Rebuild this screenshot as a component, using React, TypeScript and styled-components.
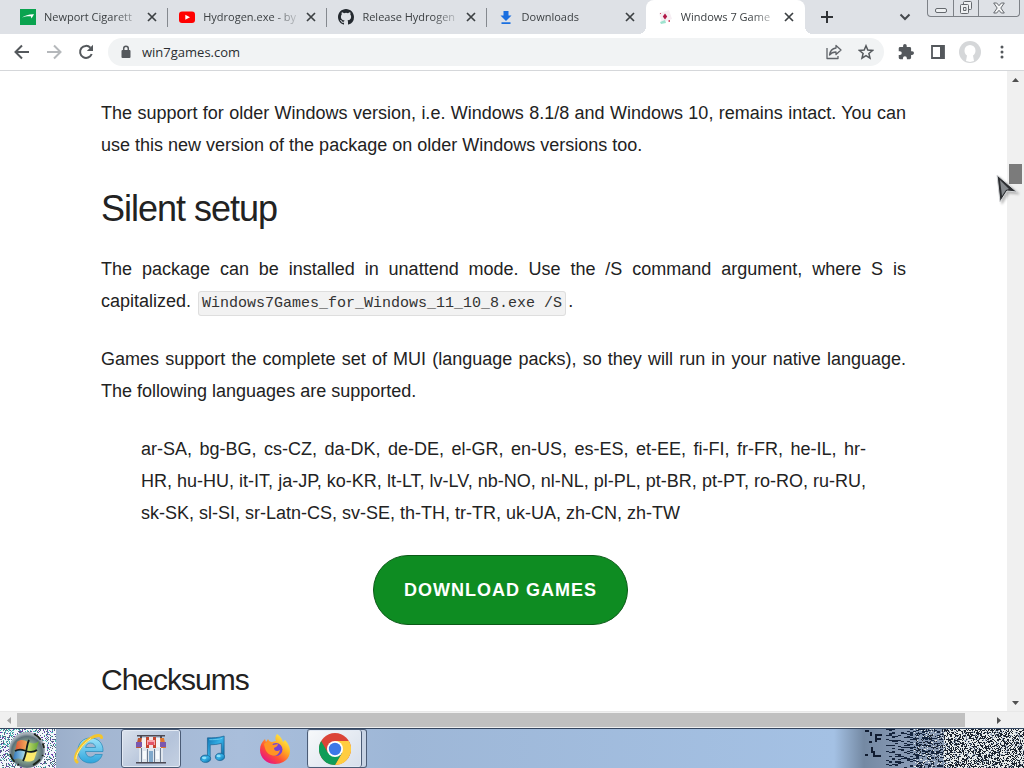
import React from 'react';
import styled, { createGlobalStyle, css } from 'styled-components';

const GlobalStyle = createGlobalStyle`
  * { box-sizing: border-box; }
  html, body, #root { height: 100%; margin: 0; }
  body { overflow: hidden; background: #fff; font-family: "Open Sans", "Noto Sans", sans-serif; }
  button, input { font: inherit; color: inherit; }
  svg { display: block; flex: none; }
`;

const Screen = styled.div`
  display: flex;
  flex-direction: column;
  height: 100%;
`;

const TabStrip = styled.div`
  display: flex;
  flex: none;
  height: 34px;
  padding-left: 9px;
  background: #dee1e6;
  color: #3c4043;
`;

const TabList = styled.div`
  display: flex;
  flex: 0 1 796px;
  min-width: 0;
`;

const TabItem = styled.div<{ $active?: boolean; $divided?: boolean }>`
  position: relative;
  display: flex;
  align-items: center;
  flex: 1 1 0;
  min-width: 0;
  gap: 8px;
  padding: 0 10px 0 11px;

  ${p => p.$divided && css`
    &::after {
      content: '';
      position: absolute;
      right: 0;
      top: 8px;
      width: 1px;
      height: 19px;
      background: #85898f;
    }
  `}

  ${p => p.$active && css`
    background: #fff;
    border-radius: 8px 8px 0 0;
    &::before, &::after {
      content: '';
      position: absolute;
      bottom: 0;
      width: 8px;
      height: 8px;
    }
    &::before { left: -8px; background: radial-gradient(circle at 0 0, transparent 8px, #fff 8px); }
    &::after { right: -8px; background: radial-gradient(circle at 100% 0, transparent 8px, #fff 8px); }
  `}
`;

const TabTitle = styled.button`
  flex: 1;
  min-width: 0;
  padding: 0;
  border: 0;
  background: none;
  overflow: hidden;
  font-size: 11px;
  line-height: 18px;
  text-align: left;
  white-space: nowrap;
  mask-image: linear-gradient(to right, #000 75%, transparent 105%);
`;

const PlainButton = styled.button<{ $size?: number }>`
  display: flex;
  align-items: center;
  justify-content: center;
  flex: none;
  width: ${p => p.$size ?? 32}px;
  height: ${p => p.$size ?? 32}px;
  padding: 0;
  border: 0;
  background: none;
`;

const StripTail = styled.div`
  display: flex;
  flex: 1;
  align-items: center;
  justify-content: space-between;
  padding: 0 6px;
`;

const WindowControls = styled.div`
  display: flex;
  flex: none;
  height: 17px;
  margin-right: 4px;
  border: 1px solid #7d8187;
  border-top: 0;
  border-radius: 0 0 4px 4px;
`;

const WindowButton = styled.button<{ $wide?: boolean }>`
  display: flex;
  align-items: center;
  justify-content: center;
  width: ${p => (p.$wide ? 41 : 25)}px;
  padding: 0;
  border: 0;
  background: none;
  & + & { border-left: 1px solid #7d8187; }
`;

const Toolbar = styled.div`
  display: flex;
  align-items: center;
  flex: none;
  height: 37px;
  padding: 0 6px;
  border-bottom: 1px solid #d5d7da;
  background: #fff;
  color: #5a5e62;
`;

const AddressBar = styled.form`
  display: flex;
  align-items: center;
  flex: 1;
  min-width: 0;
  height: 28px;
  margin: 0 6px;
  padding: 0 2px 0 12px;
  border-radius: 14px;
  background: #f1f3f4;
`;

const AddressInput = styled.input`
  flex: 1;
  min-width: 0;
  padding: 0 10px;
  border: 0;
  outline: 0;
  background: none;
  color: #2b2e31;
  font-size: 13px;
`;

const Viewport = styled.div`
  display: flex;
  flex: 1;
  min-height: 0;
`;

const Page = styled.main`
  flex: 1;
  min-width: 0;
  overflow: hidden;
  padding: 26px 101px 0;
  color: #222;
  font-family: "Liberation Sans", Arial, sans-serif;
  font-size: 18px;
  line-height: 32px;
  text-align: justify;
`;

const Paragraph = styled.p`
  margin: 0 0 26px;
`;

const SectionTitle = styled.h2`
  margin: 0 0 22px;
  font-size: 36px;
  font-weight: 400;
  line-height: 44px;
  letter-spacing: -1px;
  text-align: left;
`;

const SubTitle = styled.h3`
  margin: 36px 0 0;
  font-size: 30px;
  font-weight: 400;
  line-height: 38px;
  letter-spacing: -1px;
  text-align: left;
`;

const Quote = styled.blockquote`
  margin: 0 40px 26px;
`;

const Command = styled.code`
  margin: 0 2px;
  padding: 3px;
  border: 1px solid #dedede;
  border-radius: 3px;
  background: #f2f2f2;
  color: #333;
  font-family: "Liberation Mono", monospace;
  font-size: 15px;
  line-height: 24px;
`;

const DownloadRow = styled.div`
  display: flex;
  justify-content: center;
  padding-right: 6px;
`;

const DownloadLink = styled.a`
  padding: 18px 30px;
  border: 1px solid #0b5a17;
  border-radius: 35px;
  background: #0e8c22;
  color: #fff;
  font-size: 18px;
  font-weight: 700;
  letter-spacing: 1px;
  text-decoration: none;
`;

const VerticalBar = styled.div`
  display: flex;
  flex-direction: column;
  align-items: center;
  flex: none;
  width: 17px;
  background: #f0f0f0;
`;

const VerticalThumb = styled.div`
  width: 13px;
  height: 20px;
  margin-top: 76px;
  margin-bottom: auto;
  background: #7b7b7b;
`;

const HorizontalBar = styled.div`
  display: flex;
  align-items: center;
  flex: none;
  height: 17px;
  padding-right: 17px;
  border-top: 1px solid #e8e8e8;
  background: #f0f0f0;
`;

const HorizontalTrack = styled.div`
  flex: 1;
  padding-right: 25px;
`;

const HorizontalThumb = styled.div`
  height: 14px;
  background: #c0c0c0;
`;

const Taskbar = styled.nav`
  display: flex;
  flex: none;
  height: 40px;
  border-top: 1px solid #33455f;
  background: linear-gradient(to right, #8fa3bf 0, #a3b6d1 90px, #a9bedb 240px, #9eb7d7 400px, #a4c1e4 calc(100% - 190px), #7489a3 calc(100% - 160px), #8799b4 calc(100% - 120px), #8b9ab0 100%);
`;

const TaskButton = styled.button<{ $open?: boolean }>`
  display: flex;
  align-items: center;
  justify-content: center;
  flex: none;
  width: 60px;
  height: 39px;
  margin-right: 2px;
  padding: 0;
  border: 1px solid ${p => (p.$open ? '#4b5c76' : 'transparent')};
  border-radius: 3px;
  background: ${p => (p.$open ? 'linear-gradient(135deg, #dbe2ec, #b4c3da 60%, #c5d1e2)' : 'none')};
  box-shadow: ${p => (p.$open ? 'inset 0 0 0 1px #e3eaf4' : 'none')};
`;

const StackedTask = styled.div`
  display: flex;
  flex: none;
  width: 60px;
  height: 39px;
  border: 1px solid #4b5c76;
  border-left: 0;
  border-radius: 3px;
  background: #c7d3e4;
  ${TaskButton} {
    width: 55px;
    height: 100%;
    margin: 0;
    border-width: 0 1px;
    background: linear-gradient(135deg, #f7f9fb, #d7dfeb);
  }
`;

const StartButton = styled.button`
  flex: none;
  width: 56px;
  height: 39px;
  margin-right: 3px;
  padding: 0;
  border: 0;
  overflow: hidden;
  background: #f2f6fa;
`;

const Tray = styled.div`
  margin-left: auto;
`;

const Pointer = styled.svg`
  position: absolute;
  left: 996px;
  top: 174px;
  filter: drop-shadow(2px 2px 1px rgba(0, 0, 0, 0.25));
`;

function speckle(seed: number, width: number, height: number, keep: (x: number, y: number) => number, run = 1) {
  let state = seed;
  const random = () => {
    state = (state * 1664525 + 1013904223) >>> 0;
    return state / 4294967296;
  };
  let d = '';
  for (let y = 0; y < height; y++) {
    for (let x = 0; x < width; x += run) {
      if (random() < keep(x, y)) d += `M${x} ${y}h${run}v1h-${run}z`;
    }
  }
  return d;
}

const away = (x: number, y: number) => (Math.hypot(x - 27, y - 21) > 18 ? 1 : 0);
const startDots = [
  { fill: '#52677f', d: speckle(4, 56, 39, (x, y) => 0.22 * away(x, y)) },
  { fill: '#4bb9b6', d: speckle(9, 56, 39, (x, y) => (x < 28 && y < 20 ? 0.2 : 0.06) * away(x, y)) },
  { fill: '#6b3caf', d: speckle(17, 56, 39, (x, y) => 0.07 * away(x, y)) },
];
const trayDashes = speckle(21, 57, 39, () => 0.26, 3);
const trayDark = speckle(33, 160, 39, x => (x < 50 ? 0 : x < 80 ? 0.2 : 0.42));
const trayLight = speckle(52, 160, 39, x => (x < 50 ? 0 : x < 80 ? 0.14 : 0.85));

const CloseMark = () => (
  <svg width="10" height="10" viewBox="0 0 10 10" stroke="#3c4043" strokeWidth="1.7">
    <path d="M1 1l8 8M9 1L1 9" />
  </svg>
);

const NewportIcon = () => (
  <svg width="16" height="16" viewBox="0 0 16 16">
    <path fill="#0aa34f" d="M0 0h16v16H0z" />
    <path fill="#fff" d="M2 8.500C5 6.500 9 5 14 5.200L11.500 9.500l-.7-2.200C7.500 7 5 7.500 2 8.500z" />
  </svg>
);

const YouTubeIcon = () => (
  <svg width="16" height="16" viewBox="0 0 16 16">
    <rect y="2.500" width="16" height="11.500" rx="3" fill="#f00" />
    <path fill="#fff" d="M6.300 5.700v5L11 8.200z" />
  </svg>
);

const GitHubIcon = () => (
  <svg width="16" height="16" viewBox="0 0 16 16" fill="#24292f">
    <path d="M8 0C3.580 0 0 3.580 0 8c0 3.540 2.290 6.530 5.470 7.590.4.070.55-.17.55-.38 0-.19-.01-.82-.01-1.490-2.010.37-2.530-.49-2.690-.94-.09-.23-.48-.94-.82-1.130-.28-.15-.68-.52-.01-.53.63-.01 1.080.58 1.230.82.72 1.210 1.870.87 2.330.66.07-.52.28-.87.51-1.070-1.780-.2-3.640-.89-3.640-3.950 0-.87.31-1.590.82-2.150-.08-.2-.36-1.020.08-2.120 0 0 .67-.21 2.200.82a7.600 7.600 0 0 1 4 0c1.530-1.040 2.200-.82 2.200-.82.44 1.100.16 1.920.08 2.120.51.56.82 1.270.82 2.150 0 3.070-1.870 3.750-3.650 3.950.29.25.54.73.54 1.480 0 1.070-.01 1.930-.01 2.200 0 .21.15.46.55.38A8 8 0 0 0 16 8c0-4.420-3.580-8-8-8z" />
  </svg>
);

const DownloadIcon = () => (
  <svg width="16" height="16" viewBox="0 0 16 16" fill="#1a6fe0">
    <path d="M5.500 2h5v4.500h3L8 12 2.500 6.500h3zM3.500 13.200h9V15h-9z" />
  </svg>
);

const CardsIcon = () => (
  <svg width="16" height="16" viewBox="0 0 16 16">
    <path fill="#f6eef3" d="M2 4l10-3 3 9-10 4z" />
    <path fill="#b01545" d="M8 4.500l2.200 3L8 10.500 5.800 7.500z" />
    <path fill="#9fe3cf" d="M3 13l5-2 1 3-5 1z" />
    <path fill="#d8546f" d="M11.500 11h1.500v2h-1.500zM3 4h1v1H3z" />
  </svg>
);

const tabs = [
  { title: 'Newport Cigarett', icon: <NewportIcon />, divided: true },
  { title: 'Hydrogen.exe - by', icon: <YouTubeIcon />, divided: true },
  { title: 'Release Hydrogen', icon: <GitHubIcon />, divided: true },
  { title: 'Downloads', icon: <DownloadIcon /> },
  { title: 'Windows 7 Game', icon: <CardsIcon />, active: true },
];

const IeIcon = () => (
  <svg width="32" height="32" viewBox="0 0 32 32">
    <defs>
      <linearGradient id="ie" x2="0" y2="1">
        <stop offset="0" stopColor="#9be3fa" />
        <stop offset="1" stopColor="#2ea4dc" />
      </linearGradient>
    </defs>
    <path fill="url(#ie)" stroke="#2588b8" strokeWidth=".7" d="M30 18.500H12.500c.2 3.500 2.200 5.500 5 5.500 2.200 0 3.600-1 4.500-2.500h7.300C27.500 27 23.300 30 17.500 30 10 30 5 25 5 17.500S10.200 5 17.500 5C25.500 5 30.500 10.500 30 18.500zM12.600 14.500h10C22.300 11.800 20.300 10 17.600 10s-4.600 1.700-5 4.500z" />
    <path fill="none" stroke="#f3c52d" strokeWidth="3" strokeLinecap="round" d="M4 29C-1 25 8 10 18 5c5-3 10-3.500 10.500-.5" />
    <path fill="none" stroke="#fff09a" d="M3 26C3 21 9 11 18 5.500" />
  </svg>
);

const ShopIcon = () => (
  <svg width="32" height="32" viewBox="0 0 32 32">
    <path fill="#dfe6ee" d="M4 12h24v17H4z" />
    <path fill="#4d4a55" d="M1 29h30v1.500H1zM2 2h28v1.500H2zM5 3h2v2H5zM25 3h2v2h-2z" />
    <path fill="#c0562f" d="M3 5h4l-1 10H1z" />
    <path fill="#f4f2f4" d="M7 5h5l-1 9H6z" />
    <path fill="#c5452f" d="M11 4h3v11h-3zM18 4h3v11h-3z" />
    <path fill="#f0e4e8" d="M14 4h4v11h-4z" />
    <path fill="#f4f2f4" d="M21 5h4l1 9h-5z" />
    <path fill="#e0762d" d="M25 5h4l2 10h-5z" />
    <path fill="#7b57ae" d="M1 9h6v5H1zM25 9h6v5h-6z" />
    <path fill="#f7a3ad" d="M12 7h8v5h-8z" />
    <path fill="#e35468" d="M13 9h6v3h-6z" />
    <path fill="#6d7c90" d="M6 15h1v14H6zM25 15h1v14h-1zM12 16h1v13h-1zM19 16h1v13h-1z" />
    <path fill="#f8fbfd" d="M8 18h3v8H8zM21 18h3v8h-3z" />
    <path fill="#7fa8cb" d="M14 18h4v11h-4z" />
  </svg>
);

const MusicIcon = () => (
  <svg width="26" height="30" viewBox="0 0 28 30">
    <defs>
      <linearGradient id="note" x2="1" y2="1">
        <stop offset="0" stopColor="#0d6fae" />
        <stop offset=".5" stopColor="#35b0e6" />
        <stop offset="1" stopColor="#07659f" />
      </linearGradient>
    </defs>
    <g fill="url(#note)" stroke="#175d8d" strokeWidth=".7">
      <path d="M8 3c6 0 12 0 18-2v22h-3V9c-4 1-8 1.500-12 1.500V25H8z" />
      <ellipse cx="6" cy="25.500" rx="5.500" ry="4" />
      <ellipse cx="21.500" cy="23.500" rx="5" ry="4" />
    </g>
    <ellipse cx="4.500" cy="24.500" rx="2.500" ry="1.500" fill="#8ee1fb" />
    <ellipse cx="20" cy="22.500" rx="2.300" ry="1.500" fill="#8ee1fb" />
    <path fill="none" stroke="#69ccf0" d="M10 5c5 0 10 0 14-1.500" />
  </svg>
);

const FirefoxIcon = () => (
  <svg width="32" height="32" viewBox="0 0 32 32">
    <defs>
      <linearGradient id="fox" x1=".85" y1=".1" x2=".2" y2=".9">
        <stop offset="0" stopColor="#fff04a" />
        <stop offset=".35" stopColor="#ffae22" />
        <stop offset=".7" stopColor="#ff4c37" />
        <stop offset="1" stopColor="#e8177f" />
      </linearGradient>
    </defs>
    <path fill="url(#fox)" d="M18 1c4 3 5 5 6 8l2-2c3 3 5 7 5 11 0 8-7 13-15 13S1 25 1 17c0-5 2-8 5-11l1 3 2-3c1 2 2 3 4 3l4-1c-1-2-1-5 1-7z" />
    <circle cx="17" cy="16.500" r="6.500" fill="#7743d2" />
    <path fill="#ff9424" d="M5 11c4-4 7-2 9 1l5-1c0 2-2 3-4 4 0 3 3 4 6 2-1 5-5 7-9 5-5-2-6-6-7-11z" />
  </svg>
);

const ChromeIcon = () => (
  <svg width="32" height="32" viewBox="0 0 32 32">
    <circle cx="16" cy="16" r="16" fill="#db4437" />
    <path fill="#ffcd40" d="M29.860 8A16 16 0 0 1 16 32L22.930 20 16 8z" />
    <path fill="#0f9d58" d="M2.140 8A16 16 0 0 0 16 32L22.930 20H9.070z" />
    <circle cx="16" cy="16" r="8" fill="#fff" />
    <circle cx="16" cy="16" r="6.200" fill="#3b78e7" />
  </svg>
);

const StartOrb = () => (
  <svg width="56" height="39" viewBox="0 0 56 39">
    <defs>
      <radialGradient id="orb" cx=".5" cy=".55">
        <stop offset="0" stopColor="#f4f6b8" />
        <stop offset=".6" stopColor="#7d9a88" />
        <stop offset=".85" stopColor="#5c7078" />
        <stop offset="1" stopColor="#a5b0b8" />
      </radialGradient>
      <linearGradient id="red" x2="1"><stop offset="0" stopColor="#d9573a" /><stop offset="1" stopColor="#f9b25c" /></linearGradient>
      <linearGradient id="green" x1="1" x2="0"><stop offset="0" stopColor="#5fa235" /><stop offset="1" stopColor="#d6e873" /></linearGradient>
      <linearGradient id="blue" x2="1"><stop offset="0" stopColor="#2f75bb" /><stop offset="1" stopColor="#a9dcec" /></linearGradient>
    </defs>
    {startDots.map(dot => <path key={dot.fill} fill={dot.fill} d={dot.d} shapeRendering="crispEdges" />)}
    <circle cx="27" cy="21" r="18" fill="url(#orb)" />
    <path fill="url(#red)" d="M17 13c4-3 7-2 11 0l-3 9c-3-2-6-2-10 0z" />
    <path fill="url(#green)" d="M28 13c4 2 8 2 11-1l-3 9c-4 2-7 2-11 0z" />
    <path fill="url(#blue)" d="M15 22c4-3 7-2 10 0l-2 9c-4-2-7-2-10 0z" />
    <path fill="#fbe96c" d="M26 22c4 2 7 2 11 0l-3 9c-4 2-7 2-11 0z" />
    <path fill="none" stroke="#121c1d" strokeWidth="1.800" d="M29 11c-3 6-2 14-6 21M15 22c5-3 8-1 11 0s7 2 11-1" />
    <path fill="none" stroke="#1c2418" strokeWidth="1.800" strokeDasharray="9 4" d="M34 5c6 3 9 8 10 14M33 36c5-3 8-6 10-10M10 25c2 6 5 9 9 11" />
  </svg>
);

const trayWidth = 160;

export default function App() {
  return (
    <Screen>
      <GlobalStyle />
      <TabStrip>
        <TabList>
          {tabs.map(tab => (
            <TabItem key={tab.title} $active={tab.active} $divided={tab.divided}>
              {tab.icon}
              <TabTitle>{tab.title}</TabTitle>
              <PlainButton $size={12} aria-label={`Close ${tab.title}`}><CloseMark /></PlainButton>
            </TabItem>
          ))}
        </TabList>
        <StripTail>
          <PlainButton aria-label="New tab">
            <svg width="12" height="12" viewBox="0 0 12 12" stroke="#303336" strokeWidth="2"><path d="M6 0v12M0 6h12" /></svg>
          </PlainButton>
          <PlainButton aria-label="Search tabs">
            <svg width="12" height="8" viewBox="0 0 12 8" fill="none" stroke="#45494d" strokeWidth="2"><path d="M1.500 1.500L6 6l4.500-4.500" /></svg>
          </PlainButton>
        </StripTail>
        <WindowControls>
          <WindowButton aria-label="Minimize">
            <svg width="12" height="9" viewBox="0 0 12 9"><rect x=".5" y="4.500" width="11" height="4" rx="1.500" fill="#eef0f2" stroke="#65696e" /></svg>
          </WindowButton>
          <WindowButton aria-label="Restore">
            <svg width="14" height="14" viewBox="0 0 14 14" fill="#eef0f2" stroke="#65696e">
              <rect x="4.500" y=".5" width="8" height="8" rx="1" />
              <rect x="1.500" y="3.500" width="8" height="9" rx="1" />
              <path d="M4.500 6.500h2.500v3h-2.500z" />
            </svg>
          </WindowButton>
          <WindowButton $wide aria-label="Close">
            <svg width="12" height="12" viewBox="0 0 12 12" fill="#f5f6f7" stroke="#65696e"><path d="M.7 1h3L6 3.700 8.300 1h3L7.800 6l3.500 5h-3L6 8.300 3.700 11h-3l3.500-5z" /></svg>
          </WindowButton>
        </WindowControls>
      </TabStrip>

      <Toolbar>
        <PlainButton aria-label="Back">
          <svg width="16" height="16" viewBox="0 0 16 16" fill="none" stroke="#54585c" strokeWidth="2"><path d="M15 8H2M8 1.500L1.500 8 8 14.500" /></svg>
        </PlainButton>
        <PlainButton aria-label="Forward">
          <svg width="16" height="16" viewBox="0 0 16 16" fill="none" stroke="#b5b8bb" strokeWidth="2"><path d="M1 8h13M8 1.500L14.500 8 8 14.500" /></svg>
        </PlainButton>
        <PlainButton aria-label="Reload">
          <svg width="16" height="16" viewBox="0 0 16 16"><path fill="none" stroke="#54585c" strokeWidth="2" d="M13.700 10a6 6 0 1 1-1.300-6.300" /><path fill="#54585c" d="M15 .8V7H8.800z" /></svg>
        </PlainButton>
        <AddressBar onSubmit={e => e.preventDefault()}>
          <svg width="12" height="14" viewBox="0 0 12 14"><rect x="1.500" y="5" width="9" height="8" rx="1" fill="#54585c" /><path d="M3.700 6V3.500a2.300 2.300 0 0 1 4.600 0V6" fill="none" stroke="#54585c" strokeWidth="1.500" /></svg>
          <AddressInput aria-label="Address" defaultValue="win7games.com" />
          <PlainButton type="button" aria-label="Share">
            <svg width="16" height="16" viewBox="0 0 16 16" fill="none" stroke="#5f6368" strokeWidth="1.300" strokeLinejoin="round"><path d="M1 4v10.500h11V12" /><path d="M10 1.500l5 4.500-5 4.500V8c-3 0-5 1-6.500 3C4 7 6.500 4.500 10 4z" /></svg>
          </PlainButton>
          <PlainButton type="button" aria-label="Bookmark">
            <svg width="16" height="16" viewBox="0 0 16 16" fill="none" stroke="#54585c" strokeWidth="1.500"><path d="M8 1.800l1.800 4.300 4.700.4-3.600 3 1.100 4.600L8 11.700l-4 2.400 1.100-4.600-3.600-3 4.700-.4z" /></svg>
          </PlainButton>
        </AddressBar>
        <PlainButton aria-label="Extensions">
          <svg width="16" height="16" viewBox="1 1 22 22" fill="#54585c"><path d="M20.500 11H19V7a2 2 0 0 0-2-2h-4V3.500a2.500 2.500 0 0 0-5 0V5H4a2 2 0 0 0-2 2v3.800h1.500a2.700 2.700 0 0 1 0 5.400H2V20a2 2 0 0 0 2 2h3.800v-1.500a2.700 2.700 0 0 1 5.400 0V22H17a2 2 0 0 0 2-2v-4h1.500a2.500 2.500 0 0 0 0-5z" /></svg>
        </PlainButton>
        <PlainButton aria-label="Side panel">
          <svg width="14" height="14" viewBox="0 0 14 14"><path fill="none" stroke="#54585c" strokeWidth="1.800" d="M1 1h12v12H1z" /><path fill="#54585c" d="M9 1h4v12H9z" /></svg>
        </PlainButton>
        <PlainButton aria-label="Profile">
          <svg width="22" height="22" viewBox="0 0 22 22"><circle cx="11" cy="11" r="11" fill="#d5d7d9" /><path fill="#fff" d="M11 4a5.500 5.500 0 0 0-5.500 5.500c0 2.500 1 4 2.500 5L7 20l4 1 4-1-1-5.500c1.500-1 2.500-2.500 2.500-5A5.500 5.500 0 0 0 11 4z" /></svg>
        </PlainButton>
        <PlainButton aria-label="Menu">
          <svg width="4" height="14" viewBox="0 0 4 14" fill="#54585c"><circle cx="2" cy="2" r="1.500" /><circle cx="2" cy="7" r="1.500" /><circle cx="2" cy="12" r="1.500" /></svg>
        </PlainButton>
      </Toolbar>

      <Viewport>
        <Page>
          <Paragraph>The support for older Windows version, i.e. Windows 8.1/8 and Windows 10, remains intact. You can use this new version of the package on older Windows versions too.</Paragraph>
          <SectionTitle>Silent setup</SectionTitle>
          <Paragraph>The package can be installed in unattend mode. Use the /S command argument, where S is capitalized. <Command>Windows7Games_for_Windows_11_10_8.exe /S</Command>.</Paragraph>
          <Paragraph>Games support the complete set of MUI (language packs), so they will run in your native language. The following languages are supported.</Paragraph>
          <Quote>ar-SA, bg-BG, cs-CZ, da-DK, de-DE, el-GR, en-US, es-ES, et-EE, fi-FI, fr-FR, he-IL, hr-HR, hu-HU, it-IT, ja-JP, ko-KR, lt-LT, lv-LV, nb-NO, nl-NL, pl-PL, pt-BR, pt-PT, ro-RO, ru-RU, sk-SK, sl-SI, sr-Latn-CS, sv-SE, th-TH, tr-TR, uk-UA, zh-CN, zh-TW</Quote>
          <DownloadRow><DownloadLink href="#download">DOWNLOAD GAMES</DownloadLink></DownloadRow>
          <SubTitle>Checksums</SubTitle>
        </Page>
        <VerticalBar>
          <PlainButton $size={17} aria-label="Scroll up"><svg width="7" height="4" viewBox="0 0 7 4" fill="#505050"><path d="M0 4L3.500 0 7 4z" /></svg></PlainButton>
          <VerticalThumb />
          <PlainButton $size={17} aria-label="Scroll down"><svg width="7" height="4" viewBox="0 0 7 4" fill="#505050"><path d="M0 0h7L3.500 4z" /></svg></PlainButton>
        </VerticalBar>
      </Viewport>
      <HorizontalBar>
        <PlainButton $size={17} aria-label="Scroll left"><svg width="4" height="7" viewBox="0 0 4 7" fill="#a3a3a3"><path d="M4 0v7L0 3.500z" /></svg></PlainButton>
        <HorizontalTrack><HorizontalThumb /></HorizontalTrack>
        <PlainButton $size={17} aria-label="Scroll right"><svg width="4" height="7" viewBox="0 0 4 7" fill="#505050"><path d="M0 0v7l4-3.500z" /></svg></PlainButton>
      </HorizontalBar>

      <Taskbar>
        <StartButton aria-label="Start"><StartOrb /></StartButton>
        <TaskButton aria-label="Internet Explorer"><IeIcon /></TaskButton>
        <TaskButton $open aria-label="Game shop"><ShopIcon /></TaskButton>
        <TaskButton aria-label="Music"><MusicIcon /></TaskButton>
        <TaskButton aria-label="Firefox"><FirefoxIcon /></TaskButton>
        <StackedTask><TaskButton $open aria-label="Chrome"><ChromeIcon /></TaskButton></StackedTask>
        <Tray>
          <svg width={trayWidth} height="39" viewBox={`0 0 ${trayWidth} 39`} shapeRendering="crispEdges">
            <path fill="#e7ebea" d={trayLight} />
            <path fill="#1c2430" d={trayDark} />
            <path fill="#15243d" d={trayDashes} transform="translate(22 0)" />
            <path fill="#101c31" d="M1 1h4v2H1zM6 3h2v4H6zM11 5h7v2h-7zM11 5h2v8h-2zM13 9h4v2h-4zM5 12h3v2H5zM1 25h3v2H1zM7 18h2v4h2v4h6v2H9v-4H7z" />
          </svg>
        </Tray>
      </Taskbar>
      <Pointer width="26" height="32" viewBox="0 0 26 32">
        <path fill="#2d2f32" stroke="#d5d7d9" strokeWidth="1" d="M1 1l20 17-10-1-7 11z" />
        <path fill="#85898d" d="M4 6l9 9-3 1-4 6z" />
      </Pointer>
    </Screen>
  );
}
